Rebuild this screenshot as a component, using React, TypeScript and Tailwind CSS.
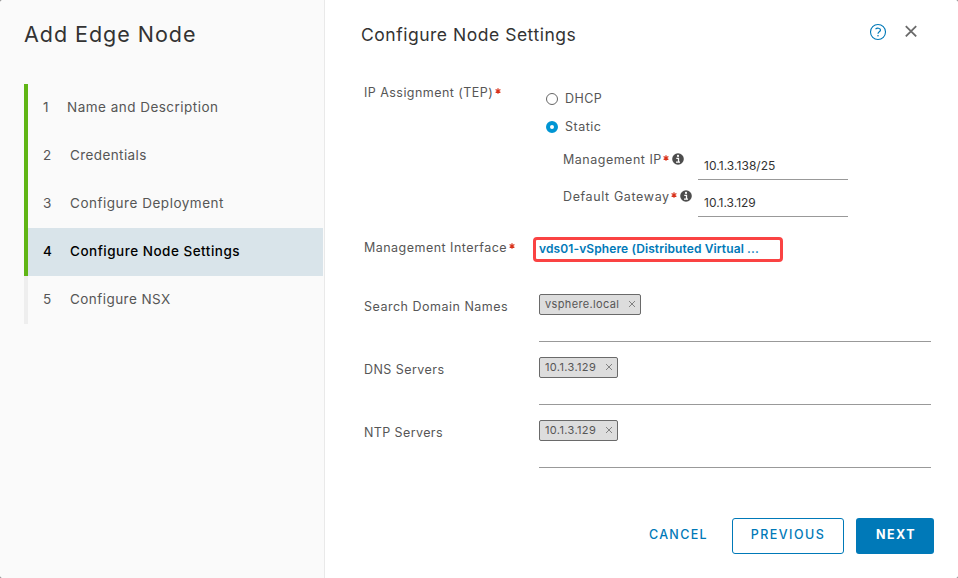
import type { ReactNode } from "react";

type Step = { n: number; label: string; spacing: string; indent: string };

const steps: Step[] = [
  { n: 1, label: "Name and Description", spacing: "tracking-[0.48px]", indent: "w-[24px]" },
  { n: 2, label: "Credentials", spacing: "tracking-[0.4px]", indent: "w-[27px]" },
  { n: 3, label: "Configure Deployment", spacing: "tracking-[0.52px]", indent: "w-[27px]" },
  { n: 4, label: "Configure Node Settings", spacing: "tracking-[0.5px]", indent: "w-[27px]" },
  { n: 5, label: "Configure NSX", spacing: "tracking-[0.45px]", indent: "w-[27px]" },
];

const CURRENT = 4;

function Required({ className = "" }: { className?: string }) {
  return (
    <svg className={`shrink-0 ${className}`} width="6" height="6" viewBox="0 0 6 6" stroke="#d9321b" strokeWidth="1.2">
      <path d="M3 0.3v5.4M0.6 1.6l4.8 2.8M5.4 1.6L0.6 4.4" />
    </svg>
  );
}

function InfoIcon({ className = "" }: { className?: string }) {
  return (
    <svg className={`shrink-0 ${className}`} width="12" height="12" viewBox="0 0 12 12">
      <circle cx="6" cy="6" r="5.8" fill="#4d4d4d" />
      <circle cx="6" cy="2.9" r="1.1" fill="#fff" />
      <path d="M4.3 5.3h2.2v3.5M4 9.1h4" fill="none" stroke="#fff" strokeWidth="1.3" />
    </svg>
  );
}

function Sidebar() {
  return (
    <aside className="flex h-full w-[325px] shrink-0 flex-col border-r border-[#e9e9e9] bg-[#fafafa]">
      <h1 className="mt-5 ml-6 h-7 text-[21.5px] leading-7 tracking-[0.97px] whitespace-nowrap text-[#333]">
        Add Edge Node
      </h1>
      <ol className="mt-9 ml-6 w-[299px]">
        {steps.map((s) => (
          <li
            key={s.n}
            className={`flex h-12 items-center border-l-4 pb-[2px] pl-[15px] text-[13.5px] whitespace-nowrap ${
              s.n <= CURRENT ? "border-[#60b515]" : "border-[#eee]"
            } ${s.n === CURRENT ? "bg-[#d9e4ea] font-medium text-black" : "text-[#565656]"}`}
          >
            <span className={`${s.indent} shrink-0`}>{s.n}</span>
            <span className={s.spacing}>{s.label}</span>
          </li>
        ))}
      </ol>
    </aside>
  );
}

function Label({ children, required = false, gap = "ml-1" }: { children: ReactNode; required?: boolean; gap?: string }) {
  return (
    <div className="flex h-5 w-[175px] shrink-0 items-center text-[12.5px] leading-5 whitespace-nowrap text-[#565656]">
      {children}
      {required && <Required className={`${gap} -mt-[4px]`} />}
    </div>
  );
}

function AddressField({ label, value, spacing, valueSpacing }: { label: string; value: string; spacing: string; valueSpacing: string }) {
  return (
    <div className="flex h-[37px] pl-6">
      <div className="mt-px flex h-5 w-[135px] shrink-0 items-center text-[12.5px] whitespace-nowrap text-[#565656]">
        <span className={spacing}>{label}</span>
        <Required className="ml-px -mt-[4px]" />
        <InfoIcon className="ml-[3px] -mt-[2px]" />
      </div>
      <div className={`mt-[7px] h-[24px] w-[150px] border-b border-[#999] pl-[6px] text-[12px] leading-[19px] text-[#333] ${valueSpacing}`}>
        {value}
      </div>
    </div>
  );
}

function TagRow({ label, tag, spacing, tagSpacing, width }: { label: string; tag: string; spacing: string; tagSpacing: string; width: string }) {
  return (
    <div className="flex h-[63px]">
      <div className="pt-[3px]">
        <Label>
          <span className={spacing}>{label}</span>
        </Label>
      </div>
      <div className="h-[48px] w-[392px] border-b border-[#999]">
        <div className={`flex h-[21px] items-center justify-between rounded-[2px] border border-[#6a6a6a] bg-[#ddd] pr-1 pl-[5px] text-[11px] text-[#565656] ${width}`}>
          <span className={`whitespace-nowrap ${tagSpacing}`}>{tag}</span>
          <svg className="-mt-px" width="8" height="8" viewBox="0 0 8 8" stroke="#777" strokeWidth="0.9">
            <path d="M1 1l6 6M7 1L1 7" />
          </svg>
        </div>
      </div>
    </div>
  );
}

function Radio({ label, checked = false, spacing }: { label: string; checked?: boolean; spacing: string }) {
  return (
    <div className="flex h-7 items-center pl-[7px] text-[12.5px] text-[#565656]">
      <svg width="12" height="12" viewBox="0 0 12 12">
        {checked ? (
          <circle cx="6" cy="6" r="4" fill="#fff" stroke="#0095d3" strokeWidth="4" />
        ) : (
          <circle cx="6" cy="6" r="5.5" fill="#fff" stroke="#666" />
        )}
      </svg>
      <span className={`ml-[7px] ${spacing}`}>{label}</span>
    </div>
  );
}

function Main() {
  return (
    <main className="flex h-full flex-1 flex-col bg-white">
      <header className="flex h-[78px] items-start pt-[21px] pl-[36px]">
        <h2 className="w-[508px] text-[17.5px] leading-7 tracking-[0.52px] whitespace-nowrap text-[#333]">
          Configure Node Settings
        </h2>
        <svg className="mt-[2px] shrink-0" width="18" height="18" viewBox="0 0 18 18" fill="none" stroke="#0079b8">
          <circle cx="9" cy="9" r="7.5" strokeWidth="1.1" />
          <path d="M6.5 6.1c1.3-1.2 5-1.4 5 1 0 1.8-2.5 1.6-2.5 3.6" strokeWidth="1.2" />
          <circle cx="9" cy="12.8" r="0.8" fill="#0079b8" stroke="none" />
        </svg>
        <svg className="mt-1 ml-[18px] shrink-0" width="12" height="12" viewBox="0 0 12 12" stroke="#6a6a6a" strokeWidth="1.8">
          <path d="M0.8 1.2l10.4 10.2M11.2 1.2L0.8 11.4" />
        </svg>
      </header>

      <section className="pl-[39px]">
        <div className="flex h-[159px]">
          <div className="pt-[5px]">
            <Label required gap="ml-[2px]">
              <span className="tracking-[0.45px]">IP Assignment (TEP)</span>
            </Label>
          </div>
          <div className="w-[392px] pt-[7px]">
            <Radio label="DHCP" spacing="tracking-[0.45px]" />
            <Radio label="Static" checked spacing="tracking-[0.5px]" />
            <div className="mt-[8px]">
              <AddressField label="Management IP" value="10.1.3.138/25" spacing="tracking-[0.5px]" valueSpacing="tracking-[0.05px]" />
              <AddressField label="Default Gateway" value="10.1.3.129" spacing="tracking-[0.62px]" valueSpacing="tracking-[0px]" />
            </div>
          </div>
        </div>

        <div className="flex h-[57px]">
          <div className="pt-px">
            <Label required gap="ml-[2px]">
              <span className="tracking-[0.47px]">Management Interface</span>
            </Label>
          </div>
          <div className="-ml-[6px] flex h-[25px] w-[250px] items-center rounded-[4px] border-[3px] border-[#fa4343] pb-px pl-[3px] text-[12px] font-semibold whitespace-nowrap text-[#0079b8]">
            <span className="tracking-[0.11px]">vds01-vSphere (Distributed Virtual ...</span>
          </div>
        </div>

        <TagRow label="Search Domain Names" tag="vsphere.local" spacing="tracking-[0.5px]" tagSpacing="tracking-[0.35px]" width="w-[102px]" />
        <TagRow label="DNS Servers" tag="10.1.3.129" spacing="tracking-[0.45px]" tagSpacing="tracking-[0.36px]" width="w-[79px]" />
        <TagRow label="NTP Servers" tag="10.1.3.129" spacing="tracking-[0.4px]" tagSpacing="tracking-[0.36px]" width="w-[79px]" />
      </section>

      <footer className="mt-auto mb-6 flex h-9 items-center justify-end pr-6 text-[12.5px] font-medium">
        <button className="mr-6 pb-[2px] tracking-[1.35px] text-[#0079b8]">CANCEL</button>
        <button className="h-9 w-28 rounded-[3px] border border-[#0079b8] pb-[2px] tracking-[1.45px] text-[#0079b8]">PREVIOUS</button>
        <button className="ml-3 h-9 w-[78px] rounded-[3px] bg-[#0079b8] pb-[2px] pl-[2px] font-bold tracking-[1.5px] text-white">NEXT</button>
      </footer>
    </main>
  );
}

export default function App() {
  return (
    <div className="h-[578px] w-[958px] bg-[#737373] font-['Inter','Liberation_Sans',sans-serif]">
      <div className="flex h-full w-full overflow-hidden rounded-[2px]">
        <Sidebar />
        <Main />
      </div>
    </div>
  );
}
